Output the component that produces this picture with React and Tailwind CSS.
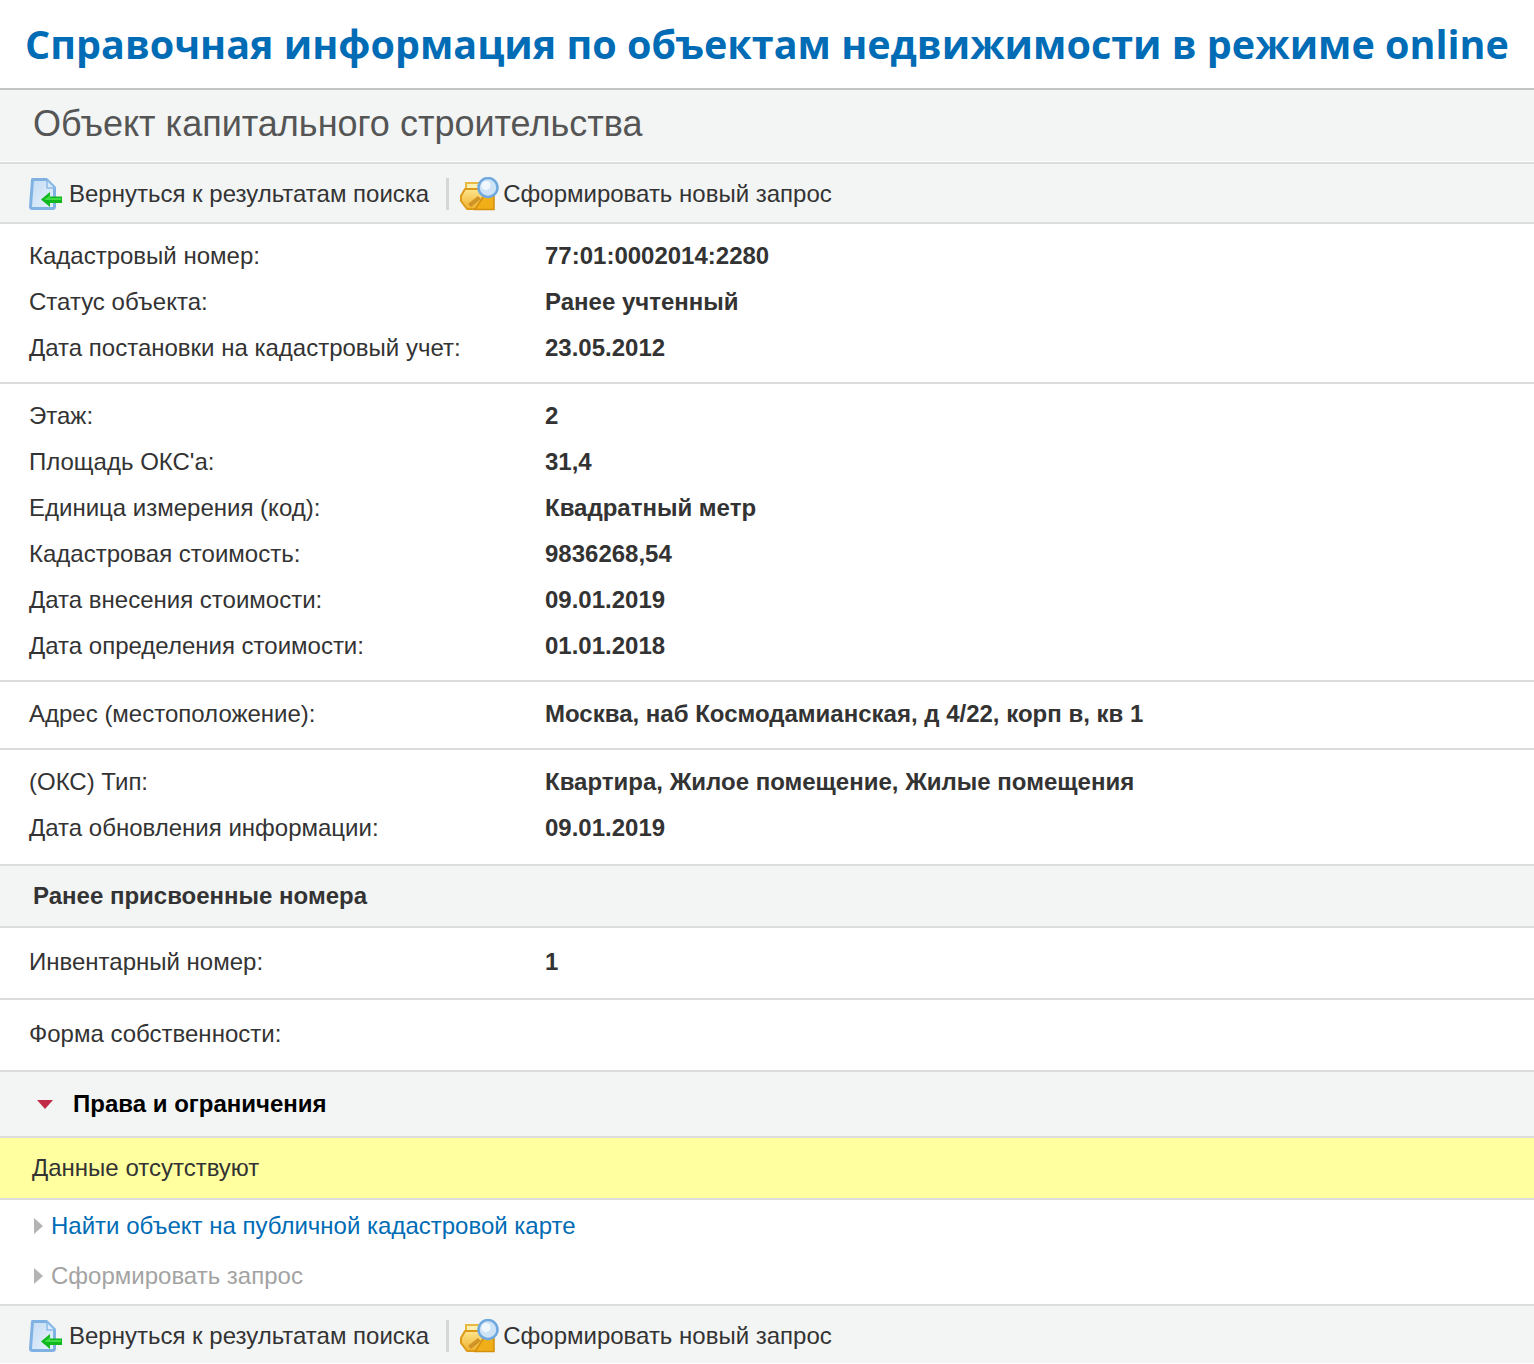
const SECTIONS = [
  {
    className: 'pt-[9px] pb-[11px]',
    rows: [
      ['Кадастровый номер:', '77:01:0002014:2280'],
      ['Статус объекта:', 'Ранее учтенный'],
      ['Дата постановки на кадастровый учет:', '23.05.2012'],
    ],
  },
  {
    className: 'pt-[9px] pb-[11px]',
    rows: [
      ['Этаж:', '2'],
      ['Площадь ОКС\'а:', '31,4'],
      ['Единица измерения (код):', 'Квадратный метр'],
      ['Кадастровая стоимость:', '9836268,54'],
      ['Дата внесения стоимости:', '09.01.2019'],
      ['Дата определения стоимости:', '01.01.2018'],
    ],
  },
  {
    className: 'pt-[9px] pb-[11px]',
    rows: [['Адрес (местоположение):', 'Москва, наб Космодамианская, д 4/22, корп в, кв 1']],
  },
  {
    className: 'pt-[9px] pb-[13px]',
    rows: [
      ['(ОКС) Тип:', 'Квартира, Жилое помещение, Жилые помещения'],
      ['Дата обновления информации:', '09.01.2019'],
    ],
  },
]

function BackIcon({ id }) {
  return (
    <svg width="34" height="34" viewBox="0 0 34 34" className="shrink-0">
      <defs>
        <linearGradient id={id} x1="0" y1="0" x2="1" y2="1">
          <stop offset="0" stopColor="#c4dcf4" />
          <stop offset="1" stopColor="#e6f1fb" />
        </linearGradient>
      </defs>
      <path d="M3.5 2.5h14l8 8v19a2 2 0 0 1-2 2h-20a2 2 0 0 1-2-2z" transform="translate(1 0)" fill={`url(#${id})`} stroke="#7fb1e3" strokeWidth="3" strokeLinejoin="round" />
      <path d="M19 3v8h8z" fill="#dcebf9" stroke="#8dbbe7" strokeWidth="1.5" strokeLinejoin="round" />
      <path d="M13 22.5l9-7.5v4.5h12v6.5H22v4z" fill="#0fb81c" />
      <path d="M17 22l5-3.5v2.5h11v2H17z" fill="#3fdc47" />
    </svg>
  )
}

function SearchFolderIcon({ id }) {
  return (
    <svg width="40" height="34" viewBox="0 0 40 34" className="shrink-0">
      <defs>
        <linearGradient id={id} x1="0" y1="0" x2="0" y2="1">
          <stop offset="0" stopColor="#fde58e" />
          <stop offset="1" stopColor="#f0b22c" />
        </linearGradient>
      </defs>
      <path d="M6 6h17v14H6z" fill="#fdf0b4" stroke="#e8b840" strokeWidth="2" />
      <path d="M1 19l4-7h18l2 6-9 14H7l-6-8z" fill={`url(#${id})`} stroke="#dc9a18" strokeWidth="2" strokeLinejoin="round" />
      <path d="M15 32.5l9-14h10v14z" fill="#f0ae18" stroke="#d48f0e" strokeWidth="1.5" />
      <path d="M8 27l10-8 3 3-10 8z" fill="#cf9326" />
      <circle cx="28" cy="10.5" r="9.5" fill="#cfe3f7" stroke="#6fa8de" strokeWidth="2.5" />
      <circle cx="26" cy="8.5" r="4.5" fill="#f0f7fd" />
    </svg>
  )
}

function Toolbar({ className, idPrefix }) {
  return (
    <div className={`flex items-center bg-[#f3f5f5] pl-[28px] text-[#333] ${className}`}>
      <BackIcon id={`${idPrefix}-doc`} />
      <span className="ml-[7px]">Вернуться к результатам поиска</span>
      <div className="ml-[17px] mr-[11px] h-8 w-[3px] bg-[#d5d7d7]" />
      <SearchFolderIcon id={`${idPrefix}-folder`} />
      <span className="ml-[3px]">Сформировать новый запрос</span>
    </div>
  )
}

function Row({ label, value }) {
  return (
    <div className="flex h-[46px] items-center pl-[29px] text-[#333]">
      <span className="w-[516px] shrink-0">{label}</span>
      <span className="font-bold">{value}</span>
    </div>
  )
}

function LinkRow({ children, className }) {
  return (
    <div className={`flex h-[50px] items-center pl-[34px] ${className}`}>
      <svg width="9" height="16" viewBox="0 0 9 16" className="mr-2 shrink-0">
        <path d="M0 0l9 8-9 8z" fill="#b4b4b4" />
      </svg>
      {children}
    </div>
  )
}

export default function App() {
  return (
    <div className="h-[1364px] w-[1534px] overflow-hidden bg-white font-['Liberation_Sans',Arial,sans-serif] text-[24px] leading-[30px]">
      <div className="flex h-[88px] items-center justify-center whitespace-nowrap font-['Open_Sans',sans-serif] text-[39.5px] font-bold text-[#006cb5]">
        Справочная информация по объектам недвижимости в режиме online
      </div>
      <div className="flex h-[73px] items-center border-t-2 border-[#c4c4c4] bg-[#f3f5f5] pb-1 pl-[33px] text-[36px] text-[#555]">
        Объект капитального строительства
      </div>
      <div className="h-[3px] border-b-2 border-[#dcdcdc] bg-white" />
      <Toolbar idPrefix="top" className="h-[60px] border-b-2 border-[#dcdcdc] pt-[2px]" />

      {SECTIONS.map((section, i) => (
        <div key={i} className={`border-b-2 border-[#dcdcdc] ${section.className}`}>
          {section.rows.map(([label, value]) => (
            <Row key={label} label={label} value={value} />
          ))}
        </div>
      ))}

      <div className="flex h-[62px] items-center border-b-2 border-[#dcdcdc] bg-[#f3f5f5] pb-px pl-[33px] font-bold text-[#333]">
        Ранее присвоенные номера
      </div>
      <div className="flex h-[72px] items-center border-b-2 border-[#dcdcdc] pb-[2px] pl-[29px] text-[#333]">
        <span className="w-[516px] shrink-0">Инвентарный номер:</span>
        <span className="font-bold">1</span>
      </div>
      <div className="flex h-[72px] items-center border-b-2 border-[#dcdcdc] pb-[2px] pl-[29px] text-[#333]">
        Форма собственности:
      </div>
      <div className="flex h-[66px] items-center border-b-2 border-[#dcdcdc] bg-[#f3f5f5] pl-[37px] font-bold text-black">
        <svg width="16" height="9" viewBox="0 0 16 9" className="mr-[20px] shrink-0">
          <path d="M0 0h16L8 9z" fill="#c02a46" />
        </svg>
        Права и ограничения
      </div>
      <div className="flex h-[62px] items-center border-b-2 border-[#dcdcdc] bg-[#ffff9f] pl-[32px] text-[#333]">
        Данные отсутствуют
      </div>
      <div className="pt-px pb-[3px]">
        <LinkRow className="text-[#006cb5]">Найти объект на публичной кадастровой карте</LinkRow>
        <LinkRow className="text-[#a3a3a3]">Сформировать запрос</LinkRow>
      </div>
      <div className="h-[2px] bg-[#dcdcdc]" />
      <Toolbar idPrefix="bottom" className="h-[57px] pt-[2px]" />
    </div>
  )
}
